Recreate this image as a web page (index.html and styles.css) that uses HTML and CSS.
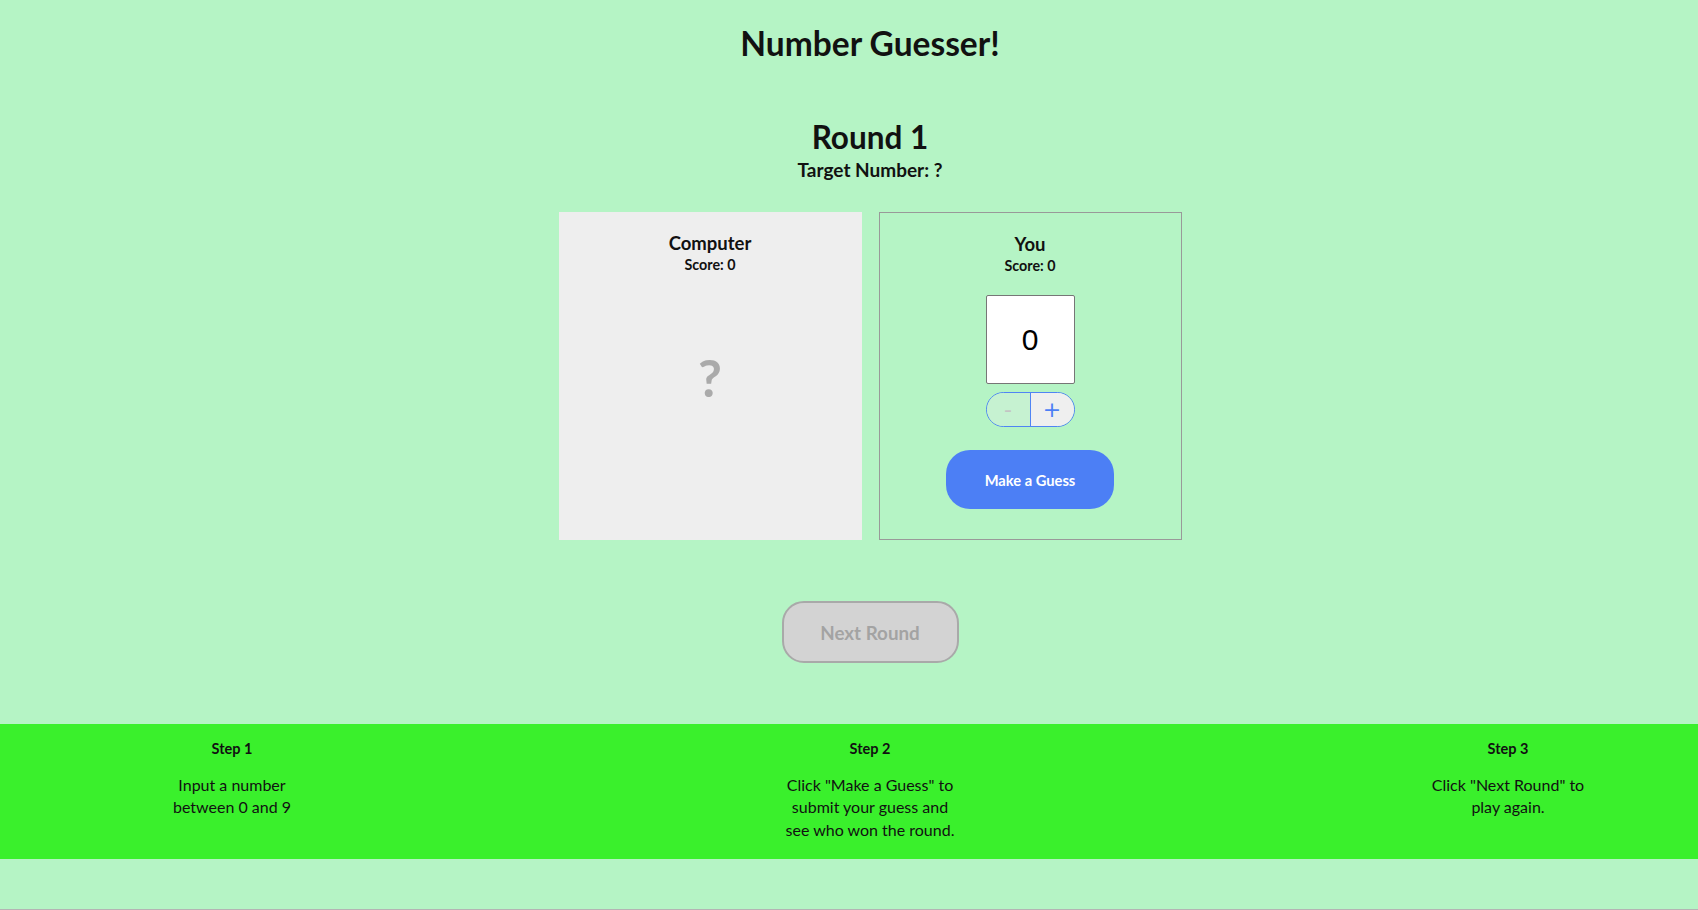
FILE: index.html
```html
<!DOCTYPE html>
<html lang="en">
<head>
<meta charset="utf-8">
<title>Number Guesser!</title>
<link rel="stylesheet" href="styles.css">
</head>
<body>
<div class="page">
  <header class="title">
    <h1>Number Guesser!</h1>
  </header>
  <section class="round">
    <h2>Round 1</h2>
    <h3>Target Number: ?</h3>
  </section>
  <section class="cards">
    <div class="card computer">
      <h3 class="card-name">Computer</h3>
      <h5 class="card-score">Score: 0</h5>
      <div class="qmark">?</div>
    </div>
    <div class="card you">
      <h3 class="card-name">You</h3>
      <h5 class="card-score">Score: 0</h5>
      <input class="guess-input" type="text" value="0">
      <div class="stepper">
        <button class="step-btn minus" disabled>-</button>
        <button class="step-btn plus">+</button>
      </div>
      <button class="guess-btn">Make a Guess</button>
    </div>
  </section>
  <div class="next-wrap">
    <button class="next-btn" disabled>Next Round</button>
  </div>
  <footer class="steps">
    <div class="step">
      <h5>Step 1</h5>
      <p>Input a number<br>between 0 and 9</p>
    </div>
    <div class="step">
      <h5>Step 2</h5>
      <p>Click "Make a Guess" to<br>submit your guess and<br>see who won the round.</p>
    </div>
    <div class="step">
      <h5>Step 3</h5>
      <p>Click "Next Round" to<br>play again.</p>
    </div>
  </footer>
</div>
</body>
</html>
```
FILE: styles.css
```css
html, body {
  margin: 0;
  padding: 0;
  overflow: hidden;
  background: #b5f4c5;
}
body {
  height: 909px;
  border-bottom: 1px solid #b4b4b4;
  font-family: "Lato", "Noto Sans", sans-serif;
  color: #111;
}
.page {
  width: 1740px;
  padding-top: 21px;
  text-align: center;
}
h1, h2, h3, h5, p { margin: 0; }

.title h1 {
  font-size: 33.5px;
  line-height: 44px;
  font-weight: 700;
}
.round {
  margin-top: 52px;
}
.round h2 {
  font-size: 31.5px;
  line-height: 40px;
  font-weight: 700;
}
.round h3 {
  font-size: 19px;
  line-height: 26px;
  font-weight: 700;
  margin-top: 0;
}
.cards {
  display: flex;
  justify-content: center;
  gap: 17px;
  margin-top: 29px;
}
.card {
  box-sizing: border-box;
  width: 303px;
  height: 328px;
  padding-top: 18px;
  display: flex;
  flex-direction: column;
  align-items: center;
}
.computer {
  background: #eeeeee;
}
.you {
  border: 1px solid #999;
}
.card-name {
  font-size: 18.5px;
  line-height: 26px;
  font-weight: 700;
}
.card-score {
  font-size: 14.3px;
  line-height: 18px;
  font-weight: 700;
}
.qmark {
  margin-top: 73px;
  font-size: 52px;
  line-height: 60px;
  font-weight: 700;
  color: #aaaaaa;
}
.guess-input {
  box-sizing: border-box;
  width: 89px;
  height: 89px;
  margin-top: 20px;
  border: 1px solid #767676;
  border-radius: 2px;
  background: #fff;
  text-align: center;
  font-family: "Liberation Sans", Arial, sans-serif;
  font-size: 30px;
  color: #000;
  padding: 0;
}
.stepper {
  display: flex;
  margin-top: 8px;
  width: 89px;
  height: 35px;
  box-sizing: border-box;
  border: 1px solid #5084f4;
  border-radius: 18px;
  overflow: hidden;
}
.step-btn {
  flex: 1;
  border: none;
  margin: 0;
  padding: 0;
  font-family: "DejaVu Sans", sans-serif;
  font-size: 22px;
  line-height: 33px;
}
.minus {
  background: #c6f2d1;
  color: #c4c4c4;
  border-right: 1px solid #5084f4;
}
.plus {
  background: #efefef;
  color: #4d7ff5;
}
.guess-btn {
  margin-top: 23px;
  width: 168px;
  height: 59px;
  border: none;
  border-radius: 24px;
  background: #4c7ff5;
  color: #fff;
  font-family: "Lato", sans-serif;
  font-weight: 700;
  font-size: 14.7px;
}
.next-wrap {
  display: flex;
  justify-content: center;
  margin-top: 61px;
}
.next-btn {
  box-sizing: border-box;
  width: 177px;
  height: 62px;
  border: 2px solid #a9a9a9;
  border-radius: 22px;
  background: #d3d3d3;
  color: #a3a3a3;
  font-family: "Lato", sans-serif;
  font-weight: 700;
  font-size: 18.8px;
}
.steps {
  margin-top: 61px;
  background: #3af02c;
  display: flex;
  justify-content: space-between;
  align-items: flex-start;
  padding: 16px 0 18px;
}
.step {
  width: 464px;
}
.step h5 {
  font-size: 14.5px;
  line-height: 18px;
  font-weight: 700;
}
.step p {
  margin-top: 16px;
  font-size: 16px;
  line-height: 22.3px;
}
```
